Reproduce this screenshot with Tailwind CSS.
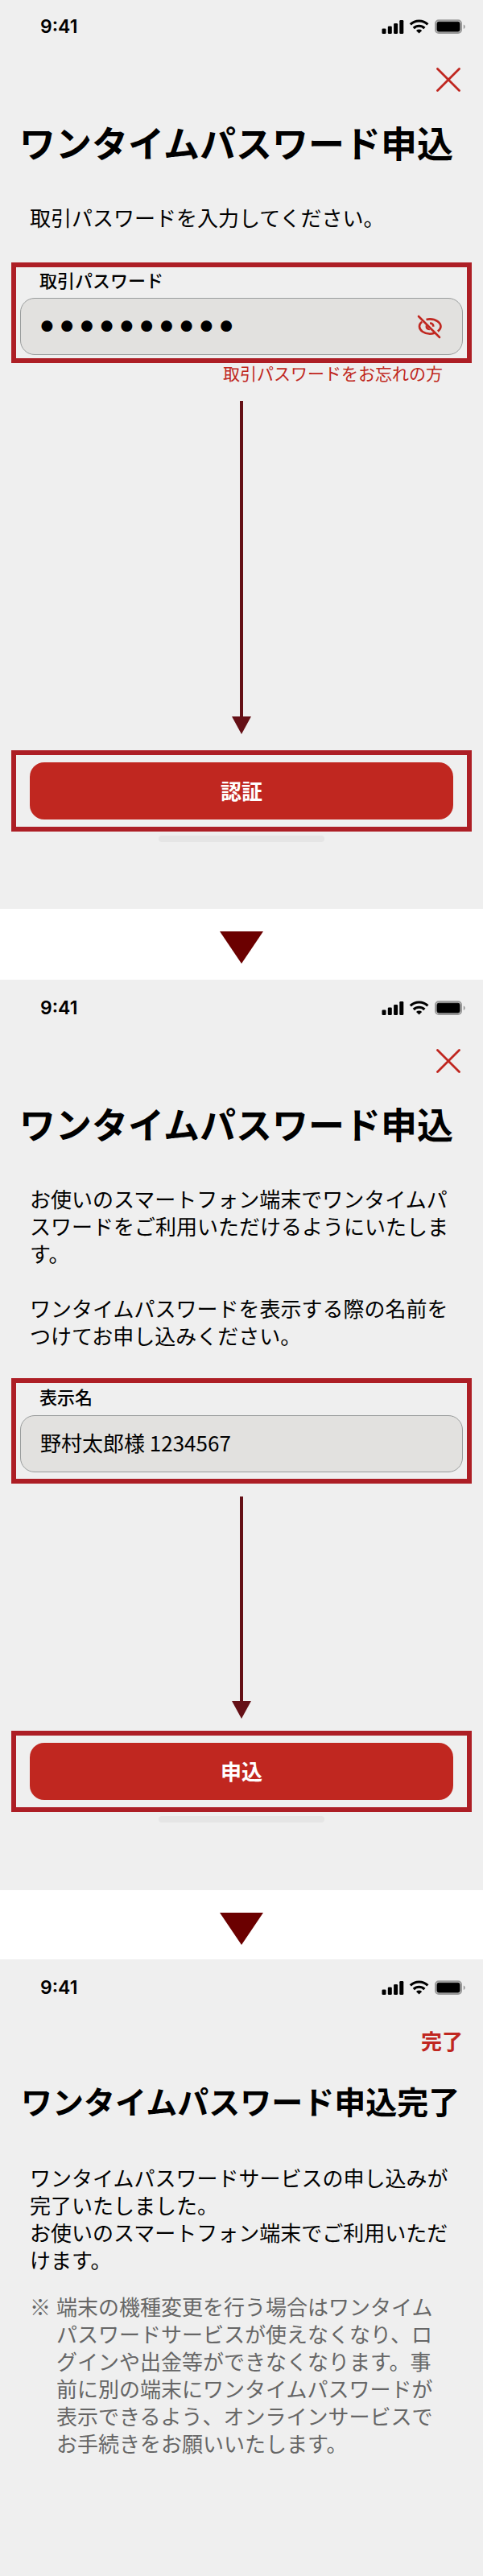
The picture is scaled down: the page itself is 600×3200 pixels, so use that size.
<!DOCTYPE html>
<html lang="ja">
<head>
    <meta charset="UTF-8">
    <meta name="viewport" content="width=device-width, initial-scale=1.0">
    <title>ワンタイムパスワード申込</title>
    <script src="https://cdn.jsdelivr.net/npm/@tailwindcss/browser@4"></script>
</head>
<body class="min-h-screen flex flex-col bg-white text-black font-['Noto_Sans_CJK_JP',sans-serif]">
    <!-- shared icons -->
    <svg class="hidden">
        <symbol id="status-icons" viewBox="0 0 104 20">
            <rect x="0.5" y="12.5" width="5" height="6.5" rx="1.3"/>
            <rect x="7.8" y="9.5" width="5" height="9.5" rx="1.3"/>
            <rect x="15.1" y="6" width="5" height="13" rx="1.3"/>
            <rect x="22.3" y="2" width="5" height="17" rx="1.3"/>
            <g fill="none" stroke="#000" stroke-width="3.2">
                <path d="M35.8 7.4a15.5 15.5 0 0 1 21.6 0"/>
                <path d="M39.8 12a9.8 9.8 0 0 1 13.6 0"/>
            </g>
            <path d="M46.6 18.6l-3.6-3.6a5.2 5.2 0 0 1 7.2 0z"/>
            <rect x="67" y="2.2" width="32" height="15.8" rx="4" fill="#e0e0e0" stroke="#9a9a9a" stroke-width="2"/>
            <rect x="69" y="4.2" width="28" height="11.8" rx="2" stroke="#000"/>
            <path d="M101.8 7.5c2.6 1 2.6 4.4 0 5.4z" fill="#9a9a9a"/>
        </symbol>
        <symbol id="icon-close" viewBox="0 0 30 30">
            <path d="M1.5 1.5l27 27M28.5 1.5l-27 27" fill="none" stroke="#c02720" stroke-width="2.8" stroke-linecap="round"/>
        </symbol>
        <symbol id="triangle" viewBox="0 0 54 40">
            <path d="M0 0h54L27 40z" fill="#6b0000"/>
        </symbol>
    </svg>

    <!-- Step 1 -->
    <section class="bg-[#efefef] pb-[83px]">
        <div class="h-[66px] flex items-center justify-between pl-[50px] pr-[22px]">
            <span class="font-['Inter',sans-serif] font-semibold text-[23px]">9:41</span>
            <svg class="w-[104px] h-5"><use href="#status-icons"/></svg>
        </div>
        <div class="h-[66px] flex items-center justify-end pr-7">
            <button type="button" aria-label="閉じる"><svg class="w-[30px] h-[30px]"><use href="#icon-close"/></svg></button>
        </div>
        <h1 class="mt-3 pl-6 text-[45px] leading-[65px] font-bold whitespace-nowrap">ワンタイムパスワード申込</h1>
        <p class="mt-11 px-[37px] text-[26px] leading-[34px]">取引パスワードを入力してください。</p>
        <div class="mt-[39px] mx-3.5 border-6 border-[#ad1e25] px-[5px] pb-1">
            <label for="password" class="block pl-6 mb-2 text-[22px] leading-[30px] font-medium">取引パスワード</label>
            <div class="flex items-center h-[71px] pl-5 pr-6 border border-[#999c9c] rounded-[18px] bg-[#e2e1df]">
                <input type="password" id="password" value="0123456789" class="flex-1 min-w-0 h-full pb-2 outline-none font-['Inter',sans-serif] text-[44px] leading-none">
                <button type="button" aria-label="パスワードを表示">
                    <svg class="w-8 h-8" viewBox="0 0 32 32" fill="none" stroke="#c02720" stroke-width="2.6">
                        <path d="M2 3l26 26" stroke-linecap="round"/>
                        <path d="M6.2 9.8C4 11.5 3 13.4 3 15.5c0 5 6 9.2 13 9.2 2.2 0 4-.4 5.6-1"/>
                        <path d="M11.5 7c1.4-.4 2.9-.6 4.5-.6 7.4 0 13.5 4.2 13.5 9.2 0 2.3-1.3 4.3-3.7 6"/>
                        <path d="M11 13.5c-1.6 4 1.4 7.3 5.6 6.6z" fill="#c02720" stroke="none"/>
                        <path d="M16 11.5c2.7 0 4.3 1.7 4.3 4.2"/>
                    </svg>
                </button>
            </div>
        </div>
        <div class="pr-[50px] text-right text-[21px] leading-6"><a href="#" class="text-[#c02720]">取引パスワードをお忘れの方</a></div>
        <div class="mt-[23px] h-[414px] flex flex-col items-center">
            <div class="w-1 flex-1 bg-[#651016]"></div>
            <svg class="w-6 h-[22px]" viewBox="0 0 24 22"><path d="M0 0h24L12 22z" fill="#651016"/></svg>
        </div>
        <div class="mt-5 mx-3.5 border-6 border-[#ad1e25] px-[17px] py-[9px]">
            <button type="button" class="block w-full h-[71px] pb-0.5 rounded-[18px] bg-[#c02720] text-white text-[26px] font-bold">認証</button>
        </div>
        <div class="mt-[5px] mx-auto w-[206px] h-2 rounded bg-[#e5e5e5]"></div>
    </section>

    <div class="pt-7 pb-5 flex justify-center">
        <svg class="w-[54px] h-10"><use href="#triangle"/></svg>
    </div>

    <!-- Step 2 -->
    <section class="bg-[#efefef] pt-0.5 pb-[84px]">
        <div class="h-[66px] flex items-center justify-between pl-[50px] pr-[22px]">
            <span class="font-['Inter',sans-serif] font-semibold text-[23px]">9:41</span>
            <svg class="w-[104px] h-5"><use href="#status-icons"/></svg>
        </div>
        <div class="h-[66px] flex items-center justify-end pr-7">
            <button type="button" aria-label="閉じる"><svg class="w-[30px] h-[30px]"><use href="#icon-close"/></svg></button>
        </div>
        <h1 class="mt-3 pl-6 text-[45px] leading-[65px] font-bold whitespace-nowrap">ワンタイムパスワード申込</h1>
        <div class="mt-11 px-[37px] text-[26px] leading-[34px]">
            <p>お使いのスマートフォン端末でワンタイムパスワードをご利用いただけるようにいたします。</p>
            <p class="mt-[34px]">ワンタイムパスワードを表示する際の名前をつけてお申し込みください。</p>
        </div>
        <div class="mt-9 mx-3.5 border-6 border-[#ad1e25] px-[5px] pb-2">
            <label for="display-name" class="block pl-6 mb-2 text-[22px] leading-8 font-medium">表示名</label>
            <input type="text" id="display-name" value="野村太郎様 1234567" class="block w-full h-[71px] px-6 pb-1 border border-[#999c9c] rounded-[18px] bg-[#e2e1df] outline-none text-[26px]">
        </div>
        <div class="mt-4 h-[276px] flex flex-col items-center">
            <div class="w-1 flex-1 bg-[#651016]"></div>
            <svg class="w-6 h-[22px]" viewBox="0 0 24 22"><path d="M0 0h24L12 22z" fill="#651016"/></svg>
        </div>
        <div class="mt-[15px] mx-3.5 border-6 border-[#ad1e25] px-[17px] py-[9px]">
            <button type="button" class="block w-full h-[71px] pb-0.5 rounded-[18px] bg-[#c02720] text-white text-[26px] font-bold">申込</button>
        </div>
        <div class="mt-[5px] mx-auto w-[206px] h-2 rounded bg-[#e5e5e5]"></div>
    </section>

    <div class="pt-7 pb-[18px] flex justify-center">
        <svg class="w-[54px] h-10"><use href="#triangle"/></svg>
    </div>

    <!-- Done -->
    <section class="grow bg-[#efefef] pt-0.5">
        <div class="h-[66px] flex items-center justify-between pl-[50px] pr-[22px]">
            <span class="font-['Inter',sans-serif] font-semibold text-[23px]">9:41</span>
            <svg class="w-[104px] h-5"><use href="#status-icons"/></svg>
        </div>
        <div class="h-16 flex items-center justify-end pr-[25px]">
            <button type="button" class="text-[26px] font-bold text-[#c02720]">完了</button>
        </div>
        <h1 class="mt-[11px] pl-[26px] text-[39px] leading-[65px] font-bold whitespace-nowrap">ワンタイムパスワード申込完了</h1>
        <div class="mt-[46px] px-[37px] text-[26px] leading-[34px]">
            <p>ワンタイムパスワードサービスの申し込みが完了いたしました。</p>
            <p>お使いのスマートフォン端末でご利用いただけます。</p>
            <div class="mt-6 pr-2 flex text-[#666]">
                <span class="w-[33px] shrink-0">※</span>
                <p>端末の機種変更を行う場合はワンタイムパスワードサービスが使えなくなり、ログインや出金等ができなくなります。事前に別の端末にワンタイムパスワードが表示できるよう、オンラインサービスでお手続きをお願いいたします。</p>
            </div>
        </div>
    </section>
</body>
</html>
